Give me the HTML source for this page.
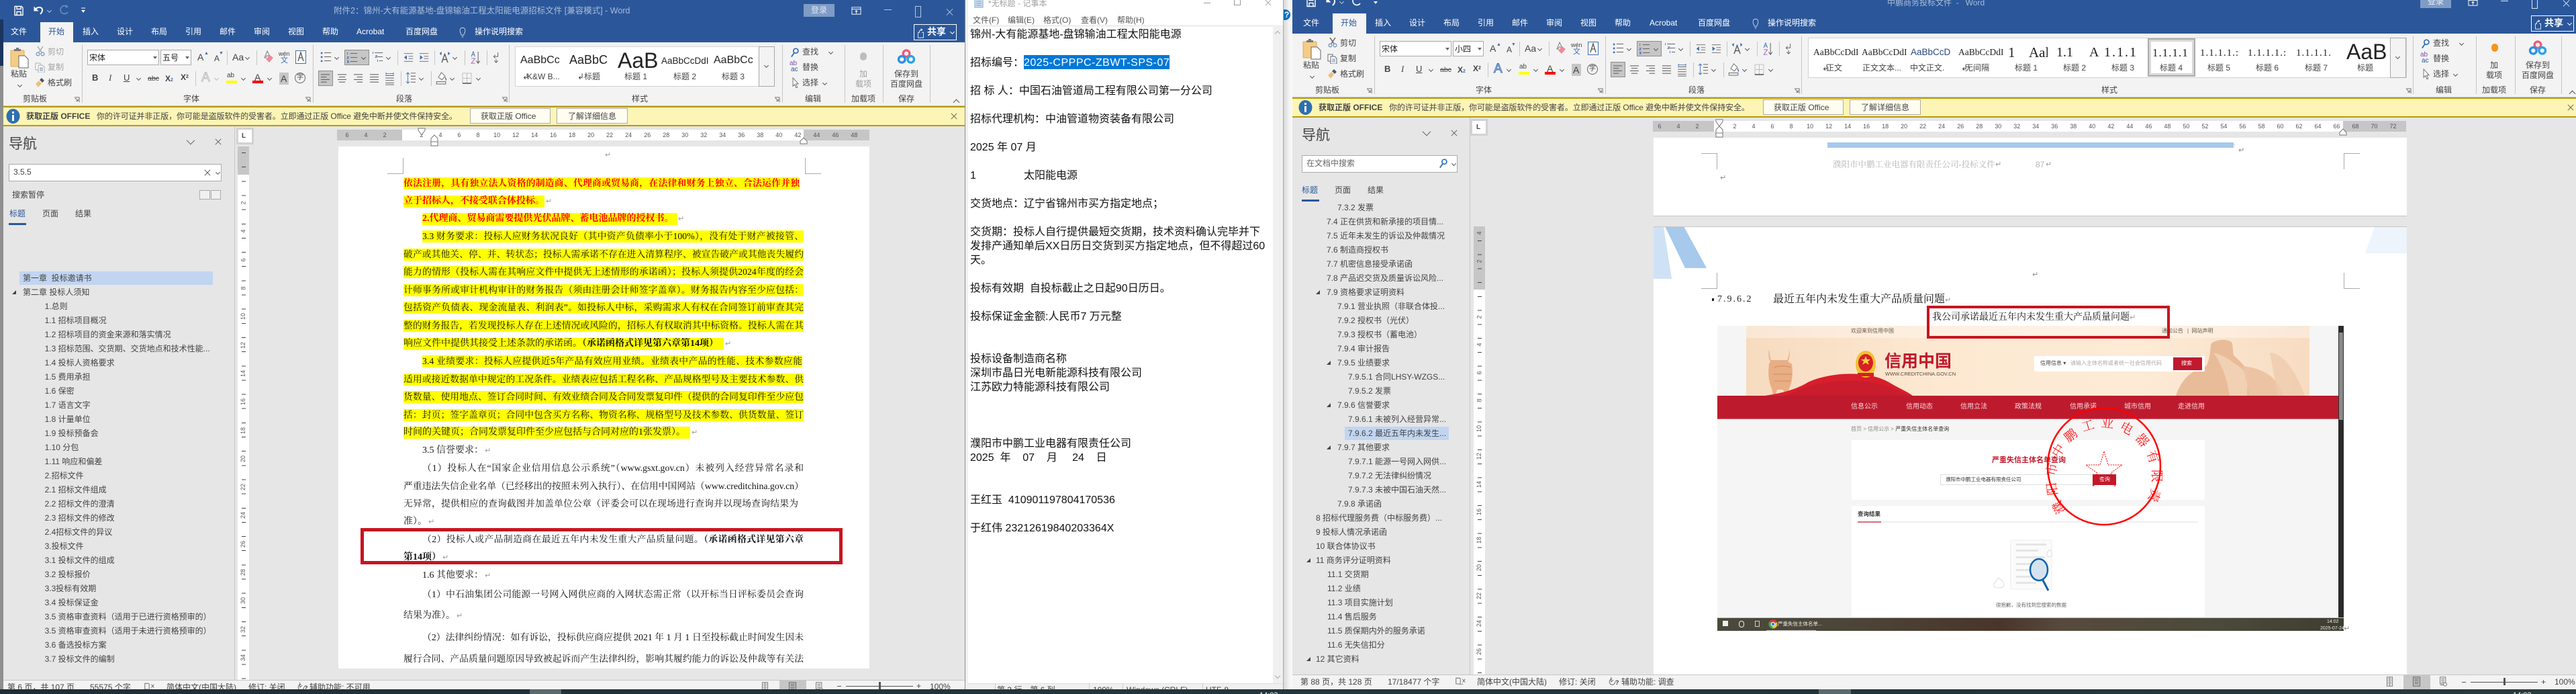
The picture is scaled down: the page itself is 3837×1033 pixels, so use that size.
<!DOCTYPE html>
<html lang="zh-CN"><head><meta charset="utf-8"><title>Word</title>
<style>
html,body{margin:0;padding:0;width:3837px;height:1033px;overflow:hidden;background:#e6e6e6}
body{position:relative;font-family:"Liberation Sans","Noto Sans CJK SC",sans-serif;font-size:12px;color:#444}
.a,i{position:absolute;white-space:nowrap;font-style:normal;line-height:14px}
div.a,svg.a{line-height:normal}
svg{display:block;overflow:visible}
.w{position:absolute}
.tab{top:40px;color:#fff;font-size:12px}
.sep{position:absolute;top:67px;width:1px;height:86px;background:#c6c6c6}
.lb{top:140px;color:#444}
.box{position:absolute;background:#fff;border:1px solid #ababab;box-sizing:border-box}
.ch{position:absolute;width:4px;height:4px;border-right:1px solid #555;border-bottom:1px solid #555;transform:rotate(45deg)}
.sel{position:absolute;background:#c6c6c6;border:1px solid #8e8e8e;box-sizing:border-box}
.rul{position:absolute;display:flex;font-size:9px;color:#555;line-height:16px;height:16px}
.rul span{width:28.03px;text-align:center;flex:none}
.vr{position:absolute;display:flex;flex-direction:column;font-size:9px;color:#555;width:17px}
.vr span{display:flex;align-items:center;justify-content:center;flex:none}
.vr span b{font-weight:normal;transform:rotate(-90deg);display:block}
.nav{position:absolute;font-size:12px;color:#444}
.nav div{height:21px;line-height:21px;white-space:nowrap;position:relative}
.tri{position:absolute;width:0;height:0;border-left:6px solid transparent;border-bottom:6px solid #444;top:7px}
.l{position:absolute;height:18px;white-space:nowrap;font:14px/18px "Liberation Serif","Noto Serif CJK SC",serif;color:#111;overflow:hidden}
.y{background:#ff0;color:#111}
.r{color:#f00;font-weight:bold}
.j{text-align:justify;text-align-last:justify;font-size:13.8px;white-space:normal}
.pm{color:#999;font:11px/18px "DejaVu Sans",sans-serif;margin-left:2px}
.np{position:absolute;left:1445px;font:16px/21px "Liberation Sans","Noto Sans CJK SC",sans-serif;color:#111;white-space:pre}
.m{font-size:12px;color:#555}
.tiny{position:absolute;white-space:nowrap;line-height:1.1;font-family:"Liberation Sans","Noto Sans CJK SC",sans-serif}
</style></head><body>

<svg width="0" height="0" style="position:absolute"><defs>
<symbol id="save" viewBox="0 0 16 16"><path d="M2 1.5h10l2 2v11H2z M5 1.5v4h6v-4 M5 14.5v-5h6v5" fill="none" stroke="#fff" stroke-width="1.4"/></symbol>
<symbol id="undo" viewBox="0 0 18 18"><path d="M4 8c2-4 9-4 10 0 .6 3-1 5-3 7" fill="none" stroke="#fff" stroke-width="2"/><path d="M1.500 3.500v7h7z" fill="#fff"/></symbol>
<symbol id="redo" viewBox="0 0 18 18"><path d="M13 4a6 6 0 1 0 1 8" fill="none" stroke="currentColor" stroke-width="1.600"/><path d="M11 1l4 3-4 2z" fill="currentColor"/></symbol>
<symbol id="more" viewBox="0 0 10 10"><path d="M2 1h6" stroke="#fff"/><path d="M2 4h6L5 8z" fill="#fff"/></symbol>
<symbol id="bulb" viewBox="0 0 14 24"><path d="M3.500 14C1 11 1 6 2.500 4c2-3 7-3 9 0 1.500 2 1.500 7-1 10l-1 3h-5zM5 19.500h4M6 22h2" fill="none" stroke="#fff"/></symbol>
<symbol id="paste" viewBox="0 0 30 32"><rect x="1" y="5" width="20" height="24" rx="1" fill="#f4cc85" stroke="#d8ad65"/><path d="M6 6v-3h3v-2h4v2h3v3z" fill="#777"/><path d="M13 13h9l5 5v13H13z" fill="#fff" stroke="#666"/></symbol>
<symbol id="cut" viewBox="0 0 15 15"><path d="M3 0l6 9M11 0L5 9" stroke="currentColor" stroke-width="1.500"/><circle cx="3.500" cy="11.500" r="2.400" fill="none" stroke="#6b8ec2" stroke-width="1.200"/><circle cx="10.500" cy="11.500" r="2.400" fill="none" stroke="#6b8ec2" stroke-width="1.200"/></symbol>
<symbol id="copy" viewBox="0 0 15 15"><path d="M1 1h7v10H1z" fill="#fff" stroke="currentColor"/><path d="M5 4h6l3 3v8H5z" fill="#fff" stroke="currentColor"/><path d="M7 8h5M7 10h5M7 12h5" stroke="#6b8ec2"/></symbol>
<symbol id="brush" viewBox="0 0 15 15"><path d="M1 9l5-5 4 4-5 6z" fill="#edc07b"/><path d="M7 3l3-3 4 4-3 3z" fill="#555"/></symbol>
<symbol id="launch" viewBox="0 0 10 10"><path d="M1 1h8v8" fill="none" stroke="#666"/><path d="M2 2l5 5M7 3.500V7H3.500" fill="none" stroke="#666"/></symbol>
<symbol id="erase" viewBox="0 0 16 20"><path d="M6 1L2 11h2l1-3h3l1 3h2z" fill="none" stroke="#7a7a7a"/><path d="M4 13l6-6 5 4-6 7z" fill="#ee8a9a"/></symbol>
<symbol id="boxA" viewBox="0 0 16 20"><rect x=".5" y=".5" width="15" height="19" fill="#fff" stroke="#3d6fb4"/><path d="M4 16L8 3l4 13M5.500 11h5" fill="none" stroke="#555" stroke-width="1.300"/></symbol>
<symbol id="ul" viewBox="0 0 20 20"><path d="M7 3h12M7 10h12M7 17h12" stroke="#666" stroke-width="1.200"/><path d="M1 2h3v3H1zM1 9h3v3H1zM1 16h3v3H1z" fill="#3d6fb4"/></symbol>
<symbol id="ol" viewBox="0 0 20 20"><path d="M7 3h12M7 10h12M7 17h12" stroke="#666" stroke-width="1.200"/><path d="M2 1v4M1 9h3l-3 3h3M1 16h3l-2 1.500 2 1.500H1" fill="none" stroke="#3d6fb4"/></symbol>
<symbol id="ml" viewBox="0 0 20 20"><path d="M5 3h14M9 10h10M13 17h6" stroke="#666" stroke-width="1.200"/><path d="M2 1v4M6 8h3l-3 3h3M10 15v4" fill="none" stroke="#3d6fb4"/></symbol>
<symbol id="ind1" viewBox="0 0 18 18"><path d="M1 2h16M9 7h8M9 11h8M1 16h16" stroke="#666" stroke-width="1.100"/><path d="M1 9l5-4v8z" fill="#3d6fb4"/></symbol>
<symbol id="ind2" viewBox="0 0 18 18"><path d="M1 2h16M9 7h8M9 11h8M1 16h16" stroke="#666" stroke-width="1.100"/><path d="M7 9L2 5v8z" fill="#3d6fb4"/></symbol>
<symbol id="cjk" viewBox="0 0 18 20"><path d="M4 19L9 5l5 14M6 14h6" fill="none" stroke="#555" stroke-width="1.500"/><path d="M1 4h3M14 4h3M1 4l2-2v4zM17 4l-2-2v4z" stroke="#3d6fb4" fill="#3d6fb4"/></symbol>
<symbol id="sort" viewBox="0 0 16 22"><path d="M1 9l3-8 3 8M2 6h4" fill="none" stroke="#3d6fb4"/><path d="M1 12h6l-6 8h6" fill="none" stroke="#a35cc0"/><path d="M12 1v19M9 16l3 4 3-4" fill="none" stroke="#555"/></symbol>
<symbol id="pil" viewBox="0 0 12 18"><path d="M9 0v7H3" fill="none" stroke="#555"/><path d="M4.500 4.500L2 7l2.500 2.500" fill="none" stroke="#555"/><path d="M6 11v6M3 14l3 3 3-3" fill="none" stroke="#555"/></symbol>
<symbol id="al" viewBox="0 0 16 16"><path d="M1 2h14M1 6h9M1 10h14M1 14h9" stroke="#666" stroke-width="1.200"/></symbol>
<symbol id="ac" viewBox="0 0 16 16"><path d="M1 2h14M3 6h10M1 10h14M3 14h10" stroke="#666" stroke-width="1.200"/></symbol>
<symbol id="ar" viewBox="0 0 16 16"><path d="M1 2h14M6 6h9M1 10h14M6 14h9" stroke="#666" stroke-width="1.200"/></symbol>
<symbol id="aj" viewBox="0 0 16 16"><path d="M1 2h14M1 6h14M1 10h14M1 14h14" stroke="#666" stroke-width="1.200"/></symbol>
<symbol id="ad" viewBox="0 0 16 22"><path d="M1 6h14M1 10h14M1 14h14M1 18h14M1 21h14" stroke="#666" stroke-width="1.100"/><path d="M2 1v4M14 1v4M2 3h12" stroke="#3d6fb4"/></symbol>
<symbol id="lsp" viewBox="0 0 18 20"><path d="M9 2h8M9 7h8M9 12h8M9 17h8" stroke="#666" stroke-width="1.200"/><path d="M4 1v18M1 4l3-3 3 3M1 16l3 3 3-3" fill="none" stroke="#3d6fb4"/></symbol>
<symbol id="shade" viewBox="0 0 18 22"><path d="M4 10l5-8 6 6-5 6z" fill="#fff" stroke="#666"/><path d="M15 10c2 3 2 4 1 5" fill="none" stroke="#3d6fb4" stroke-width="1.500"/><rect x="1" y="17" width="15" height="4" fill="#eee" stroke="#666"/></symbol>
<symbol id="bord" viewBox="0 0 16 18"><path d="M1 1h14v16H1z" fill="none" stroke="#777" stroke-dasharray="1 1.500"/><path d="M1 17h14" stroke="#444" stroke-width="1.500"/><path d="M8 2v14M2 9h12" stroke="#777" stroke-dasharray="1 1.500"/></symbol>
<symbol id="find" viewBox="0 0 14 16"><circle cx="9" cy="5" r="3.800" fill="none" stroke="#2f6fb7" stroke-width="1.800"/><path d="M6.500 8L2 14.500" stroke="#2f6fb7" stroke-width="2"/></symbol>
<symbol id="curs" viewBox="0 0 12 18"><path d="M1 1l9 10H6l2.500 6-2 .8L4 12l-3 3z" fill="#fff" stroke="#666"/></symbol>
<symbol id="bd" viewBox="0 0 28 24"><circle cx="14" cy="7" r="5" fill="none" stroke="#ee5a78" stroke-width="3.500"/><circle cx="7" cy="16" r="5" fill="none" stroke="#2b8fe8" stroke-width="3.500"/><circle cx="21" cy="16" r="5" fill="none" stroke="#27a4ea" stroke-width="3.500"/></symbol>
<symbol id="share" viewBox="0 0 12 20"><path d="M1 9h3M8 9h3v10H1V9" fill="none" stroke="#fff"/><path d="M3 10c0-3 1-6 5-6M6 2l3 2-3 2" fill="none" stroke="#fff"/></symbol>
<symbol id="rest" viewBox="0 0 16 16"><path d="M1 3h14v11H1zM1 6h14M8 13V8M6 10l2-2 2 2" fill="none" stroke="#fff"/></symbol>
<symbol id="x" viewBox="0 0 12 12"><path d="M1 1l10 10M11 1L1 11" stroke="currentColor" stroke-width="1"/></symbol>
<symbol id="book" viewBox="0 0 20 14"><path d="M1 1h6l2 1v11l-2-1H1zM11 13l3-1" fill="none" stroke="#555"/><path d="M13 3l5 6M18 3l-5 6" stroke="#555"/></symbol>
<symbol id="acc" viewBox="0 0 18 14"><path d="M6 3a5 5 0 1 0 5 5" fill="none" stroke="#555"/><path d="M4 0v8l4-3" fill="none" stroke="#555"/><text x="11" y="13" font-size="11" font-weight="bold" fill="#444">?</text></symbol>
<symbol id="vw1" viewBox="0 0 12 18"><path d="M1 1h10v16H1zM6 1v16M2.500 4h2M2.500 7h2M2.500 10h2M2.500 13h2M7.500 4h2M7.500 7h2M7.500 10h2M7.500 13h2" fill="none" stroke="#666"/></symbol>
<symbol id="vw2" viewBox="0 0 14 18"><path d="M1 1h12v16H1zM3 4h8M3 7h8M3 10h8M3 13h8" fill="none" stroke="#555"/></symbol>
<symbol id="vw3" viewBox="0 0 14 18"><path d="M1 1h10v12H1zM3 4h6M3 7h6M3 10h6M1 15h7" fill="none" stroke="#666"/><circle cx="10" cy="14" r="3" fill="#fff" stroke="#666"/></symbol>
</defs></svg>

<!-- screen edges -->
<div class="w" style="left:0;top:0;width:5px;height:1026px;background:linear-gradient(#2b579a 0 29px,#1b3460 29px 98px,#8f8f8f 98px)"></div>
<div class="w" style="left:1912px;top:0;width:13px;height:1026px;background:linear-gradient(90deg,#d8d8d8,#f3f3f3 8px,#fafafa)"></div>
<div class="w" style="left:1906px;top:14px;width:16px;height:16px;border-radius:8px;background:#0f6cbd"></div>
<i style="left:1913px;top:15px;color:#fff;font-weight:bold;font-size:12px">?</i>

<!-- ================== LEFT WORD ================== -->
<div class="w" style="left:0;top:0;width:1437px;height:1026px;overflow:hidden">
<div class="w" style="left:5px;top:0;width:1432px;height:63px;background:#2b579a"></div>
<div class="w" style="left:5px;top:63px;width:1432px;height:94px;background:#f3f3f3;border-bottom:1px solid #c6c6c6"></div>
<div class="w" style="left:5px;top:158px;width:1432px;height:30px;background:#fcf5b5;border-top:2px solid #b99a08;border-bottom:2px solid #b99a08;box-sizing:border-box"></div>

<svg class="a" style="left:20px;top:7px;color:#fff" width="16" height="18"><use href="#save"/></svg>
<svg class="a" style="left:49px;top:6px" width="18" height="18"><use href="#undo"/></svg>
<div class="ch" style="left:71px;top:13px;border-color:#b9c8e0"></div>
<svg class="a" style="left:87px;top:6px;color:#6d8dbd" width="18" height="18"><use href="#redo"/></svg>
<svg class="a" style="left:119px;top:11px" width="10" height="10"><use href="#more"/></svg>
<i style="left:497px;top:9px;color:#a9bcd9;font-size:12.500px">附件2：锦州-大有能源基地-盘锦输油工程太阳能电源招标文件 [兼容模式]  -  Word</i>

<i class="tab" style="left:16px">文件</i>
<div class="w" style="left:60px;top:33px;width:49px;height:30px;background:#f3f3f3"></div>
<i class="tab" style="left:72px;color:#2b579a">开始</i><i class="tab" style="left:123px">插入</i><i class="tab" style="left:174px">设计</i><i class="tab" style="left:225px">布局</i><i class="tab" style="left:276px">引用</i><i class="tab" style="left:327px">邮件</i><i class="tab" style="left:378px">审阅</i><i class="tab" style="left:429px">视图</i><i class="tab" style="left:480px">帮助</i><i class="tab" style="left:531px">Acrobat</i><i class="tab" style="left:604px">百度网盘</i>
<svg class="a" style="left:682px;top:40px" width="14" height="17"><use href="#bulb"/></svg>
<i class="tab" style="left:707px">操作说明搜索</i>

<!-- clipboard -->
<svg class="a" style="left:15px;top:70px" width="30" height="32"><use href="#paste"/></svg>
<i style="left:16px;top:103px">粘贴</i><div class="ch" style="left:27px;top:124px"></div>
<svg class="a" style="left:53px;top:69px;color:#aaa" width="15" height="15"><use href="#cut"/></svg><i style="left:71px;top:70px;color:#a5a5a5">剪切</i>
<svg class="a" style="left:52px;top:93px;color:#aaa" width="15" height="15"><use href="#copy"/></svg><i style="left:71px;top:93px;color:#a5a5a5">复制</i>
<svg class="a" style="left:52px;top:116px" width="15" height="15"><use href="#brush"/></svg><i style="left:71px;top:116px">格式刷</i>
<i class="lb" style="left:34px">剪贴板</i><svg class="a" style="left:110px;top:144px" width="9" height="9"><use href="#launch"/></svg>
<div class="sep" style="left:122px"></div>
<!-- font -->
<div class="box" style="left:130px;top:74px;width:107px;height:23px"></div><i style="left:133px;top:79px;color:#222">宋体</i>
<div class="w" style="left:228px;top:84px;border:3px solid transparent;border-top:4px solid #666"></div>
<div class="box" style="left:239px;top:74px;width:46px;height:23px"></div><i style="left:242px;top:79px;color:#222">五号</i>
<div class="w" style="left:276px;top:84px;border:3px solid transparent;border-top:4px solid #666"></div>
<i style="left:294px;top:78px;font-size:14px">A</i><i style="left:304px;top:73px;font-size:7px;color:#3d6fb4">▲</i>
<i style="left:319px;top:80px;font-size:12px">A</i><i style="left:326px;top:73px;font-size:7px;color:#3d6fb4">▼</i>
<div class="sep" style="left:338px;top:75px;height:22px"></div>
<i style="left:346px;top:78px;font-size:14px">Aa</i><div class="ch" style="left:366px;top:83px"></div>
<div class="sep" style="left:382px;top:75px;height:22px"></div>
<svg class="a" style="left:392px;top:75px" width="16" height="20"><use href="#erase"/></svg>
<i style="left:415px;top:73px;font-size:9px">wén</i><i style="left:418px;top:83px;font-size:11px;color:#3d6fb4">文</i>
<svg class="a" style="left:440px;top:75px" width="16" height="20"><use href="#boxA"/></svg>
<i style="left:137px;top:109px;font-weight:bold;font-size:13px">B</i><i style="left:162px;top:109px;font-style:italic;font-size:13px;font-family:'Liberation Serif'">I</i><i style="left:184px;top:109px;font-size:13px;text-decoration:underline">U</i><div class="ch" style="left:204px;top:114px"></div>
<i style="left:220px;top:110px;font-size:10.500px;text-decoration:line-through">abc</i><i style="left:246px;top:110px;font-size:12px;font-weight:bold">X<span style="font-size:7px;color:#3d6fb4">2</span></i><i style="left:269px;top:108px;font-size:12px;font-weight:bold">X<span style="font-size:7px;vertical-align:top">2</span></i>
<div class="sep" style="left:291px;top:106px;height:22px"></div>
<i class="fx" style="left:300px;top:106px;font-size:19px;line-height:20px;color:#fff;-webkit-text-stroke:1px #b8b8b8">A</i><div class="ch" style="left:320px;top:114px;border-color:#bbb"></div>
<i style="left:338px;top:106px;font-size:10px">ab</i><div class="w" style="left:337px;top:120px;width:16px;height:4px;background:#ff0"></div><div class="ch" style="left:360px;top:114px"></div>
<i style="left:379px;top:108px;font-size:14px">A</i><div class="w" style="left:376px;top:120px;width:16px;height:4px;background:#f00"></div><div class="ch" style="left:399px;top:114px"></div>
<div class="w" style="left:416px;top:108px;width:14px;height:18px;background:#c6c6c6"></div><i style="left:418px;top:110px;font-size:14px">A</i>
<div class="w" style="left:439px;top:108px;width:16px;height:16px;border:1px solid #666;border-radius:9px;box-sizing:border-box"></div><i style="left:442px;top:109px;font-size:10px;line-height:14px">字</i>
<i class="lb" style="left:273px">字体</i><svg class="a" style="left:454px;top:144px" width="9" height="9"><use href="#launch"/></svg>
<div class="sep" style="left:466px"></div>
<!-- para -->
<svg class="a" style="left:477px;top:76px" width="17" height="17"><use href="#ul"/></svg><div class="ch" style="left:499px;top:83px"></div>
<div class="sel" style="left:513px;top:74px;width:37px;height:23px"></div><svg class="a" style="left:516px;top:77px" width="17" height="17"><use href="#ol"/></svg><div class="ch" style="left:539px;top:83px"></div>
<svg class="a" style="left:554px;top:76px" width="17" height="17"><use href="#ml"/></svg><div class="ch" style="left:576px;top:83px"></div>
<div class="sep" style="left:592px;top:75px;height:22px"></div>
<svg class="a" style="left:600px;top:78px" width="17" height="15"><use href="#ind1"/></svg><svg class="a" style="left:623px;top:78px" width="17" height="15"><use href="#ind2"/></svg>
<div class="sep" style="left:647px;top:75px;height:22px"></div>
<svg class="a" style="left:654px;top:76px" width="17" height="18"><use href="#cjk"/></svg><div class="ch" style="left:675px;top:83px"></div>
<div class="sep" style="left:692px;top:75px;height:22px"></div>
<svg class="a" style="left:701px;top:76px" width="15" height="20"><use href="#sort"/></svg>
<div class="sep" style="left:725px;top:75px;height:22px"></div>
<svg class="a" style="left:733px;top:78px" width="12" height="16"><use href="#pil"/></svg>
<div class="sel" style="left:474px;top:105px;width:22px;height:23px"></div>
<svg class="a" style="left:477px;top:109px" width="15" height="15"><use href="#al"/></svg><svg class="a" style="left:502px;top:109px" width="15" height="15"><use href="#ac"/></svg><svg class="a" style="left:526px;top:109px" width="15" height="15"><use href="#ar"/></svg><svg class="a" style="left:550px;top:109px" width="15" height="15"><use href="#aj"/></svg><svg class="a" style="left:573px;top:107px" width="15" height="20"><use href="#ad"/></svg>
<div class="sep" style="left:597px;top:106px;height:22px"></div>
<svg class="a" style="left:604px;top:107px" width="16" height="18"><use href="#lsp"/></svg><div class="ch" style="left:625px;top:114px"></div>
<div class="sep" style="left:642px;top:106px;height:22px"></div>
<svg class="a" style="left:649px;top:106px" width="17" height="20"><use href="#shade"/></svg><div class="ch" style="left:671px;top:114px"></div>
<svg class="a" style="left:688px;top:108px" width="15" height="17"><use href="#bord"/></svg><div class="ch" style="left:710px;top:114px"></div>
<i class="lb" style="left:590px">段落</i><svg class="a" style="left:747px;top:144px" width="9" height="9"><use href="#launch"/></svg>
<div class="sep" style="left:758px"></div>
<!-- gallery -->
<div class="w" style="left:767px;top:69px;width:386px;height:60px;background:#fff;border:1px solid #d2d2d2;box-sizing:border-box"></div>
<div class="w" style="left:1130px;top:69px;width:24px;height:60px;background:#f3f3f3;border:1px solid #a8a8a8;box-sizing:border-box"></div>
<div class="ch" style="left:1139px;top:95px"></div>
<i style="left:775px;top:83px;font-size:16px;color:#222">AaBbCc</i><i style="left:778px;top:107px">↲</i><i style="left:785px;top:107px">K&amp;W B...</i>
<i style="left:848px;top:82px;font-size:18px;color:#222">AaBbC</i><i style="left:860px;top:107px">↲</i><i style="left:870px;top:107px">标题</i>
<i style="left:920px;top:79px;font-size:32px;color:#222;line-height:22px">AaB</i><i style="left:930px;top:107px">标题 1</i>
<i style="left:985px;top:84px;font-size:13.500px;color:#222">AaBbCcDdI</i><i style="left:1003px;top:107px">标题 2</i>
<i style="left:1063px;top:83px;font-size:16px;color:#222">AaBbCc</i><i style="left:1075px;top:107px">标题 3</i>
<i class="lb" style="left:941px">样式</i><svg class="a" style="left:1153px;top:144px" width="9" height="9"><use href="#launch"/></svg>
<!-- right groups -->
<div class="sep" style="left:1165px"></div>
<svg class="a" style="left:1177px;top:71px" width="13" height="15"><use href="#find"/></svg><i style="left:1195px;top:70px">查找</i><div class="ch" style="left:1235px;top:75px"></div>
<i style="left:1176px;top:90px;font-size:10px;line-height:10px;color:#7b4fa8">ab</i><i style="left:1178px;top:99px;font-size:10px;line-height:10px;color:#2b579a">ac</i><i style="left:1195px;top:93px">替换</i>
<svg class="a" style="left:1180px;top:115px" width="11" height="16"><use href="#curs"/></svg><i style="left:1195px;top:116px">选择</i><div class="ch" style="left:1226px;top:121px"></div>
<i class="lb" style="left:1199px">编辑</i>
<div class="sep" style="left:1258px"></div>
<div class="w" style="left:1281px;top:78px;width:10px;height:12px;border-radius:5px;background:#bdbdbd"></div>
<i style="left:1280px;top:103px;color:#a0a0a0">加</i><i style="left:1274px;top:118px;color:#a0a0a0">载项</i>
<i class="lb" style="left:1268px">加载项</i>
<div class="sep" style="left:1315px"></div>
<svg class="a" style="left:1336px;top:73px" width="28" height="23"><use href="#bd"/></svg>
<i style="left:1332px;top:103px">保存到</i><i style="left:1326px;top:118px">百度网盘</i>
<i class="lb" style="left:1338px">保存</i>
<div class="sep" style="left:1385px"></div>
<div class="w" style="left:1421px;top:149px;width:6px;height:6px;border-left:1px solid #555;border-top:1px solid #555;transform:rotate(45deg)"></div>
<!-- title right -->
<div class="w" style="left:1197px;top:6px;width:46px;height:19px;background:#7f9cc6"></div><i style="left:1208px;top:8px;color:#dfe7f3">登录</i>
<svg class="a" style="left:1268px;top:8px" width="15" height="15"><use href="#rest"/></svg>
<div class="w" style="left:1317px;top:14px;width:11px;height:1px;background:#b6c6df"></div>
<div class="w" style="left:1363px;top:9px;width:9px;height:17px;border:1px solid #b6c6df;box-sizing:border-box"></div>
<svg class="a" style="left:1409px;top:9px;color:#b6c6df" width="11" height="18"><use href="#x" /></svg>
<div class="w" style="left:1361px;top:36px;width:64px;height:24px;border:1px solid #fff;box-sizing:border-box"></div>
<svg class="a" style="left:1366px;top:41px" width="11" height="16"><use href="#share"/></svg><i style="left:1381px;top:40px;color:#fff;font-size:14px;font-weight:bold">共享</i><div class="ch" style="left:1416px;top:45px;border-color:#fff"></div>
<!-- message bar -->
<svg class="a" style="left:9px;top:162px" width="21" height="22"><ellipse cx="10.500" cy="11" rx="10" ry="11" fill="#2f6fb0"/><rect x="9" y="9" width="3" height="9" fill="#fff"/><rect x="9" y="4" width="3" height="3" fill="#fff"/></svg>
<i style="left:39px;top:166px;font-weight:bold;color:#444;font-size:12px">获取正版 OFFICE</i>
<i style="left:144px;top:166px;color:#444;font-size:12px;letter-spacing:-.1px">你的许可证并非正版，你可能是盗版软件的受害者。立即通过正版 Office 避免中断并使文件保持安全。</i>
<div class="box" style="left:700px;top:161px;width:120px;height:23px;background:#fffdf0"></div><i style="left:716px;top:166px">获取正版 Office</i>
<div class="box" style="left:829px;top:161px;width:106px;height:23px;background:#fffdf0"></div><i style="left:846px;top:166px">了解详细信息</i>
<svg class="a" style="left:1416px;top:168px;color:#555" width="10" height="10"><use href="#x"/></svg>

<!-- nav -->
<div class="w" style="left:349px;top:188px;width:1px;height:824px;background:#c8c8c8"></div>
<i style="left:13px;top:204px;font-size:21px;line-height:22px;color:#444">导航</i>
<div class="w" style="left:279px;top:204px;width:9px;height:9px;border-right:1px solid #555;border-bottom:1px solid #555;transform:rotate(45deg) scale(.9)"></div>
<svg class="a" style="left:320px;top:206px;color:#555" width="10" height="10"><use href="#x"/></svg>
<div class="box" style="left:13px;top:244px;width:317px;height:26px"></div><i style="left:20px;top:249px;font-size:12px">3.5.5</i>
<svg class="a" style="left:304px;top:252px;color:#444" width="10" height="10"><use href="#x"/></svg><div class="ch" style="left:322px;top:254px"></div>
<i style="left:18px;top:283px">搜索暂停</i>
<div class="box" style="left:297px;top:283px;width:16px;height:14px;background:#f0f0f0"></div><div class="box" style="left:314px;top:283px;width:15px;height:14px;background:#f0f0f0"></div>
<i style="left:14px;top:311px;color:#2b579a">标题</i><i style="left:63px;top:311px">页面</i><i style="left:112px;top:311px">结果</i>
<div class="w" style="left:13px;top:332px;width:26px;height:3px;background:#2b579a"></div>
<div class="w" style="left:29px;top:404px;width:288px;height:20px;background:#c1d5f1"></div>
<div class="nav" style="left:0;top:403.500px;width:340px">
<div style="padding-left:34px">第一章&nbsp;&nbsp;投标邀请书</div>
<div style="padding-left:34px"><span class="tri" style="left:18px"></span>第二章 投标人须知</div>
<div style="padding-left:66.600px">1.总则</div><div style="padding-left:66.600px">1.1 招标项目概况</div><div style="padding-left:66.600px">1.2 招标项目的资金来源和落实情况</div><div style="padding-left:66.600px">1.3 招标范围、交货期、交货地点和技术性能...</div><div style="padding-left:66.600px">1.4 投标人资格要求</div><div style="padding-left:66.600px">1.5 费用承担</div><div style="padding-left:66.600px">1.6 保密</div><div style="padding-left:66.600px">1.7 语言文字</div><div style="padding-left:66.600px">1.8 计量单位</div><div style="padding-left:66.600px">1.9 投标预备会</div><div style="padding-left:66.600px">1.10 分包</div><div style="padding-left:66.600px">1.11 响应和偏差</div><div style="padding-left:66.600px">2.招标文件</div><div style="padding-left:66.600px">2.1 招标文件组成</div><div style="padding-left:66.600px">2.2 招标文件的澄清</div><div style="padding-left:66.600px">2.3 招标文件的修改</div><div style="padding-left:66.600px">2.4招标文件的异议</div><div style="padding-left:66.600px">3.投标文件</div><div style="padding-left:66.600px">3.1 投标文件的组成</div><div style="padding-left:66.600px">3.2 投标报价</div><div style="padding-left:66.600px">3.3投标有效期</div><div style="padding-left:66.600px">3.4 投标保证金</div><div style="padding-left:66.600px">3.5 资格审查资料（适用于已进行资格预审的）</div><div style="padding-left:66.600px">3.5 资格审查资料（适用于未进行资格预审的）</div><div style="padding-left:66.600px">3.6 备选投标方案</div><div style="padding-left:66.600px">3.7 投标文件的编制</div>
</div>

<!-- rulers -->
<div class="w" style="left:352px;top:190px;width:26px;height:25px;background:#d2d2d2"></div><div class="w" style="left:355px;top:193px;width:20px;height:19px;background:#fff"></div><i style="left:360px;top:196px;font-weight:bold;font-size:10px">L</i>
<div class="w" style="left:502px;top:193px;width:793px;height:16px;background:#fff"></div>
<div class="w" style="left:502px;top:193px;width:97px;height:16px;background:#c6c6c6"></div>
<div class="w" style="left:1197px;top:193px;width:98px;height:16px;background:#c6c6c6"></div>
<div class="rul" style="left:503px;top:193px"><span>6</span><span>4</span><span>2</span></div>
<div class="rul" style="left:614px;top:193px"><span>2</span><span>4</span><span>6</span><span>8</span><span>10</span><span>12</span><span>14</span><span>16</span><span>18</span><span>20</span><span>22</span><span>24</span><span>26</span><span>28</span><span>30</span><span>32</span><span>34</span><span>36</span><span>38</span><span>40</span><span>42</span><span>44</span><span>46</span><span>48</span></div>
<svg class="a" style="left:622px;top:190px" width="35" height="28"><path d="M1 1h10v3l-5 7-5-7z" fill="#fff" stroke="#777"/><path d="M31 11l5 5v11H26V16z" transform="translate(-6,0)" fill="#fff" stroke="#777"/><path d="M20 21h10" stroke="#777"/></svg>
<svg class="a" style="left:1192px;top:204px" width="12" height="10"><path d="M5 1l5 5v4H0V6z" fill="#fff" stroke="#777"/></svg>
<div class="w" style="left:354px;top:218px;width:17px;height:794px;background:#fff"></div>
<div class="w" style="left:354px;top:218px;width:17px;height:42px;background:#c6c6c6"></div>
<div class="w" style="left:360px;top:217.100px;width:6px;height:795px;background:repeating-linear-gradient(transparent 0 10px,#444 10px 11px,transparent 11px 31.200px,#444 31.200px 32.200px,transparent 32.200px 42.300px)"></div>
<div class="vr" style="left:354px;top:281px"><span style="height:42.300px"><b>2</b></span><span style="height:42.300px"><b>4</b></span><span style="height:42.300px"><b>6</b></span><span style="height:42.300px"><b>8</b></span><span style="height:42.300px"><b>10</b></span><span style="height:42.300px"><b>12</b></span><span style="height:42.300px"><b>14</b></span><span style="height:42.300px"><b>16</b></span><span style="height:42.300px"><b>18</b></span><span style="height:42.300px"><b>20</b></span><span style="height:42.300px"><b>22</b></span><span style="height:42.300px"><b>24</b></span><span style="height:42.300px"><b>26</b></span><span style="height:42.300px"><b>28</b></span><span style="height:42.300px"><b>30</b></span><span style="height:42.300px"><b>32</b></span><span style="height:42.300px"><b>34</b></span></div>

<!-- page -->
<div class="w" style="left:504px;top:218px;width:791px;height:777px;background:#fff"></div>
<div class="w" style="left:600px;top:235px;width:1px;height:24px;background:#aaa"></div><div class="w" style="left:577px;top:258px;width:24px;height:1px;background:#aaa"></div>
<div class="w" style="left:1199px;top:235px;width:1px;height:24px;background:#aaa"></div><div class="w" style="left:1199px;top:258px;width:24px;height:1px;background:#aaa"></div>
<i class="pm" style="left:899px;top:222px">↵</i>

<div class="l y r j" style="left:601px;top:264px;width:590px;color:#f00">依法注册，具有独立法人资格的制造商、代理商或贸易商，在法律和财务上独立、合法运作并独</div>
<div class="l y r" style="left:601px;top:291px;color:#f00">立于招标人，不接受联合体投标。</div><i class="pm" style="left:811px;top:291px">↵</i>
<div class="l y r" style="left:629px;top:317px;color:#f00;width:380px">2.代理商、贸易商需要提供光伏品牌、蓄电池品牌的授权书。</div><i class="pm" style="left:1008px;top:317px">↵</i>
<div class="l y j" style="left:629px;top:343px;width:568px">3.3 财务要求：投标人应财务状况良好（其中资产负债率小于100%），没有处于财产被接管、</div>
<div class="l y j" style="left:601px;top:370px;width:596px">破产或其他关、停、并、转状态；投标人需承诺不存在进入清算程序、被宣告破产或其他丧失履约</div>
<div class="l y j" style="left:601px;top:396px;width:596px">能力的情形（投标人需在其响应文件中提供无上述情形的承诺函）；投标人须提供2024年度的经会</div>
<div class="l y j" style="left:601px;top:423px;width:596px">计师事务所或审计机构审计的财务报告（须由注册会计师签字盖章）。财务报告内容至少应包括：</div>
<div class="l y j" style="left:601px;top:449px;width:596px">包括资产负债表、现金流量表、利润表”。如投标人中标，采购需求人有权在合同签订前审查其完</div>
<div class="l y j" style="left:601px;top:476px;width:596px">整的财务报告，若发现投标人存在上述情况或风险的，招标人有权取消其中标资格。投标人需在其</div>
<div class="l y" style="left:601px;top:503px;width:477px">响应文件中提供其接受上述条款的承诺函。<b>（承诺函格式详见第六章第14项）</b></div><i class="pm" style="left:1078px;top:503px">↵</i>
<div class="l y j" style="left:629px;top:529px;width:566px">3.4 业绩要求：投标人应提供近5年产品有效应用业绩。业绩表中产品的性能、技术参数应能</div>
<div class="l y j" style="left:601px;top:556px;width:596px">适用或接近数据单中规定的工况条件。业绩表应包括工程名称、产品规格型号及主要技术参数、供</div>
<div class="l y j" style="left:601px;top:582px;width:596px">货数量、使用地点、签订合同时间、有效业绩合同及合同发票复印件（提供的合同复印件至少应包</div>
<div class="l y j" style="left:601px;top:609px;width:596px">括：封页；签字盖章页；合同中包含买方名称、物资名称、规格型号及技术参数、供货数量、签订</div>
<div class="l y" style="left:601px;top:635px;width:427px">时间的关键页；合同发票复印件至少应包括与合同对应的1张发票）。</div><i class="pm" style="left:1028px;top:635px">↵</i>
<div class="l" style="left:629px;top:662px">3.5 信誉要求：<span class="pm">↵</span></div>
<div class="l j" style="left:629px;top:688px;width:568px">（1）投标人在“国家企业信用信息公示系统”（www.gsxt.gov.cn）未被列入经营异常名录和</div>
<div class="l j" style="left:601px;top:715px;width:596px">严重违法失信企业名单（已经移出的按照未列入执行）、在信用中国网站（www.creditchina.gov.cn）</div>
<div class="l j" style="left:601px;top:741px;width:588px">无异常，提供相应的查询截图并加盖单位公章（评委会可以在现场进行查询并以现场查询结果为</div>
<div class="l" style="left:601px;top:768px">准）。<span class="pm">↵</span></div>
<div class="l j" style="left:629px;top:794px;width:568px">（2）投标人或产品制造商在最近五年内未发生重大产品质量问题。<b>（承诺函格式详见第六章</b></div>
<div class="l" style="left:601px;top:821px"><b>第14项）</b><span class="pm">↵</span></div>
<div class="l" style="left:629px;top:848px">1.6 其他要求：<span class="pm">↵</span></div>
<div class="l j" style="left:629px;top:876px;width:568px">（1）中石油集团公司能源一号网入网供应商的入网状态需正常（以开标当日评标委员会查询</div>
<div class="l" style="left:601px;top:908px">结果为准）。<span class="pm">↵</span></div>
<div class="l j" style="left:629px;top:940px;width:568px">（2）法律纠纷情况：如有诉讼，投标供应商应提供 2021 年 1 月 1 日至投标截止时间发生因未</div>
<div class="l j" style="left:601px;top:972px;width:596px">履行合同、产品质量问题原因导致被起诉而产生法律纠纷，影响其履约能力的诉讼及仲裁等有关法</div>
<div class="w" style="left:537px;top:786px;width:718px;height:54px;border:5px solid #c9141f;box-sizing:border-box"></div>

<!-- status -->
<div class="w" style="left:5px;top:1012px;width:1432px;height:14px;background:#f3f3f3;border-top:1px solid #c6c6c6;box-sizing:border-box"></div>
<i style="left:11px;top:1016px">第 6 页，共 107 页</i><i style="left:134px;top:1016px">55575 个字</i>
<svg class="a" style="left:215px;top:1016px" width="16" height="12"><use href="#book"/></svg>
<i style="left:248px;top:1016px">简体中文(中国大陆)</i><i style="left:370px;top:1016px">修订: 关闭</i>
<svg class="a" style="left:443px;top:1016px" width="16" height="12"><use href="#acc"/></svg><i style="left:461px;top:1016px">辅助功能: 不可用</i>
<svg class="a" style="left:1134px;top:1015px" width="11" height="15"><use href="#vw1"/></svg>
<div class="w" style="left:1161px;top:1013px;width:40px;height:13px;background:#c6c6c6"></div>
<svg class="a" style="left:1174px;top:1015px" width="13" height="15"><use href="#vw2"/></svg>
<svg class="a" style="left:1214px;top:1015px" width="13" height="15"><use href="#vw3"/></svg>
<div class="w" style="left:1247px;top:1021px;width:6px;height:1px;background:#555"></div><div class="w" style="left:1260px;top:1021px;width:100px;height:1px;background:#555"></div><div class="w" style="left:1309px;top:1015px;width:3px;height:11px;background:#555"></div>
<i style="left:1365px;top:1014px">+</i><i style="left:1385px;top:1015px">100%</i>
</div>

<!-- ================== NOTEPAD ================== -->
<div class="w" style="left:1437px;top:0;width:475px;height:1026px;background:#fff;border-left:1px solid #8d8d8d;box-sizing:border-box"></div>
<div class="w" style="left:1438px;top:0;width:4px;height:1026px;background:#f0f0f0"></div>
<div class="w" style="left:1442px;top:37px;width:470px;height:3px;background:#f0f0f0"></div>
<div class="w" style="left:1896px;top:40px;width:16px;height:977px;background:#f0f0f0"></div>
<div class="w" style="left:1911px;top:0;width:1px;height:1026px;background:#aaa"></div>
<svg class="a" style="left:1451px;top:0" width="15" height="12"><path d="M1-3h12v14H1z" fill="#cfe2f5" stroke="#7fa4c7"/><path d="M3 2h8M3 5h8M3 8h8" stroke="#7d9bb8"/></svg>
<i style="left:1472px;top:-2px;color:#a0a0a0;font-size:12px">*无标题 - 记事本</i>
<div class="w" style="left:1793px;top:4px;width:10px;height:1px;background:#999"></div>
<div class="w" style="left:1838px;top:-1px;width:10px;height:9px;border:1px solid #999;box-sizing:border-box"></div>
<svg class="a" style="left:1884px;top:-1px;color:#999" width="10" height="10"><use href="#x"/></svg>
<i class="m" style="left:1449px;top:23px">文件(F)</i><i class="m" style="left:1501px;top:23px">编辑(E)</i><i class="m" style="left:1554px;top:23px">格式(O)</i><i class="m" style="left:1610px;top:23px">查看(V)</i><i class="m" style="left:1664px;top:23px">帮助(H)</i>
<div class="w" style="left:1525px;top:82px;width:217px;height:21px;background:#0078d7"></div>
<div class="np" style="top:41px">锦州-大有能源基地-盘锦输油工程太阳能电源</div>
<div class="np" style="top:83px">招标编号：</div><div class="np" style="top:83px;left:1525px;color:#fff;letter-spacing:.5px">2025-CPPPC-ZBWT-SPS-074</div>
<div class="np" style="top:125px">招 标 人：中国石油管道局工程有限公司第一分公司</div>
<div class="np" style="top:167px">招标代理机构：中油管道物资装备有限公司</div>
<div class="np" style="top:209px">2025 年 07 月</div>
<div class="np" style="top:251px">1</div><div class="np" style="top:251px;left:1525px">太阳能电源</div>
<div class="np" style="top:293px">交货地点：辽宁省锦州市买方指定地点；</div>
<div class="np" style="top:335px">交货期：投标人自行提供最短交货期，技术资料确认完毕并下</div>
<div class="np" style="top:356px">发排产通知单后XX日历日交货到买方指定地点，但不得超过60</div>
<div class="np" style="top:377px">天。</div>
<div class="np" style="top:419px">投标有效期  自投标截止之日起90日历日。</div>
<div class="np" style="top:461px">投标保证金金额:人民币7 万元整</div>
<div class="np" style="top:524px">投标设备制造商名称</div>
<div class="np" style="top:545px">深圳市晶日光电新能源科技有限公司</div>
<div class="np" style="top:566px">江苏欧力特能源科技有限公司</div>
<div class="np" style="top:650px">濮阳市中鹏工业电器有限责任公司</div>
<div class="np" style="top:671px">2025  年    07    月     24    日</div>
<div class="np" style="top:734px">王红玉  410901197804170536</div>
<div class="np" style="top:776px">于红伟 23212619840203364X</div>
<div class="w" style="left:1900px;top:47px;width:5px;height:5px;border-left:1.500px solid #aaa;border-top:1.500px solid #aaa;transform:rotate(45deg)"></div>
<div class="w" style="left:1900px;top:1003px;width:5px;height:5px;border-right:1.500px solid #aaa;border-bottom:1.500px solid #aaa;transform:rotate(45deg)"></div>
<div class="w" style="left:1442px;top:1017px;width:469px;height:9px;background:#f0f0f0;border-top:1px solid #ddd;box-sizing:border-box;overflow:hidden"></div>
<div class="w" style="left:1482px;top:1017px;width:1px;height:9px;background:#ccc"></div><div class="w" style="left:1622px;top:1017px;width:1px;height:9px;background:#ccc"></div><div class="w" style="left:1672px;top:1017px;width:1px;height:9px;background:#ccc"></div><div class="w" style="left:1791px;top:1017px;width:1px;height:9px;background:#ccc"></div>
<div class="w" style="left:1442px;top:1017px;width:469px;height:9px;overflow:hidden">
<i style="left:43px;top:3px">第 3 行，第 6 列</i><i style="left:186px;top:3px">100%</i><i style="left:236px;top:3px">Windows (CRLF)</i><i style="left:354px;top:3px">UTF-8</i></div>

<!-- ================== RIGHT WORD ================== -->
<div class="w" style="left:1925px;top:-13px;width:1912px;height:1039px;overflow:hidden">
<div class="w" style="left:0;top:0;width:1912px;height:63px;background:#2b579a"></div>
<div class="w" style="left:0;top:63px;width:1912px;height:94px;background:#f3f3f3;border-bottom:1px solid #c6c6c6"></div>
<div class="w" style="left:0;top:158px;width:1912px;height:30px;background:#fcf5b5;border-top:2px solid #b99a08;border-bottom:2px solid #b99a08;box-sizing:border-box"></div>

<svg class="a" style="left:20px;top:7px" width="16" height="18"><use href="#save"/></svg>
<svg class="a" style="left:49px;top:6px" width="18" height="18"><use href="#undo"/></svg>
<div class="ch" style="left:71px;top:13px;border-color:#b9c8e0"></div>
<svg class="a" style="left:87px;top:6px;color:#fff" width="18" height="18"><use href="#redo"/></svg>
<svg class="a" style="left:119px;top:11px" width="10" height="10"><use href="#more"/></svg>
<i style="left:886px;top:10px;color:#a9bcd9">中鹏商务投标文件&nbsp;&nbsp;-&nbsp;&nbsp;&nbsp;Word</i>

<i class="tab" style="left:16px">文件</i>
<div class="w" style="left:60px;top:33px;width:50px;height:30px;background:#f3f3f3"></div>
<i class="tab" style="left:72px;color:#2b579a">开始</i><i class="tab" style="left:123px">插入</i><i class="tab" style="left:174px">设计</i><i class="tab" style="left:225px">布局</i><i class="tab" style="left:276px">引用</i><i class="tab" style="left:327px">邮件</i><i class="tab" style="left:378px">审阅</i><i class="tab" style="left:429px">视图</i><i class="tab" style="left:480px">帮助</i><i class="tab" style="left:532px">Acrobat</i><i class="tab" style="left:604px">百度网盘</i>
<svg class="a" style="left:683px;top:40px" width="14" height="17"><use href="#bulb"/></svg>
<i class="tab" style="left:708px">操作说明搜索</i>

<svg class="a" style="left:15px;top:70px" width="30" height="32"><use href="#paste"/></svg>
<i style="left:16px;top:103px">粘贴</i><div class="ch" style="left:27px;top:124px"></div>
<svg class="a" style="left:53px;top:69px;color:#666" width="15" height="15"><use href="#cut"/></svg><i style="left:71px;top:70px">剪切</i>
<svg class="a" style="left:52px;top:93px;color:#666" width="15" height="15"><use href="#copy"/></svg><i style="left:71px;top:93px">复制</i>
<svg class="a" style="left:52px;top:116px" width="15" height="15"><use href="#brush"/></svg><i style="left:71px;top:116px">格式刷</i>
<i class="lb" style="left:34px">剪贴板</i><svg class="a" style="left:110px;top:144px" width="9" height="9"><use href="#launch"/></svg>
<div class="sep" style="left:122px"></div>
<div class="box" style="left:130px;top:74px;width:107px;height:23px"></div><i style="left:133px;top:79px;color:#222">宋体</i>
<div class="w" style="left:228px;top:84px;border:3px solid transparent;border-top:4px solid #666"></div>
<div class="box" style="left:239px;top:74px;width:46px;height:23px"></div><i style="left:242px;top:79px;color:#222">小四</i>
<div class="w" style="left:276px;top:84px;border:3px solid transparent;border-top:4px solid #666"></div>
<i style="left:294px;top:78px;font-size:14px">A</i><i style="left:304px;top:73px;font-size:7px;color:#3d6fb4">▲</i>
<i style="left:319px;top:80px;font-size:12px">A</i><i style="left:326px;top:73px;font-size:7px;color:#3d6fb4">▼</i>
<div class="sep" style="left:338px;top:75px;height:22px"></div>
<i style="left:346px;top:78px;font-size:14px">Aa</i><div class="ch" style="left:366px;top:83px"></div>
<div class="sep" style="left:382px;top:75px;height:22px"></div>
<svg class="a" style="left:392px;top:75px" width="16" height="20"><use href="#erase"/></svg>
<i style="left:415px;top:73px;font-size:9px">wén</i><i style="left:418px;top:83px;font-size:11px;color:#3d6fb4">文</i>
<svg class="a" style="left:440px;top:75px" width="16" height="20"><use href="#boxA"/></svg>
<i style="left:137px;top:109px;font-weight:bold;font-size:13px">B</i><i style="left:162px;top:109px;font-style:italic;font-size:13px;font-family:'Liberation Serif'">I</i><i style="left:184px;top:109px;font-size:13px;text-decoration:underline">U</i><div class="ch" style="left:204px;top:114px"></div>
<i style="left:220px;top:110px;font-size:10.500px;text-decoration:line-through">abc</i><i style="left:246px;top:110px;font-size:12px;font-weight:bold">X<span style="font-size:7px;color:#3d6fb4">2</span></i><i style="left:269px;top:108px;font-size:12px;font-weight:bold">X<span style="font-size:7px;vertical-align:top">2</span></i>
<div class="sep" style="left:291px;top:106px;height:22px"></div>
<i style="left:300px;top:106px;font-size:19px;line-height:20px;color:#cfe0f5;-webkit-text-stroke:1px #3d6fb4">A</i><div class="ch" style="left:320px;top:114px"></div>
<i style="left:338px;top:106px;font-size:10px">ab</i><div class="w" style="left:337px;top:120px;width:16px;height:4px;background:#ff0"></div><div class="ch" style="left:360px;top:114px"></div>
<i style="left:379px;top:108px;font-size:14px">A</i><div class="w" style="left:376px;top:120px;width:16px;height:4px;background:#f00"></div><div class="ch" style="left:399px;top:114px"></div>
<div class="w" style="left:416px;top:108px;width:14px;height:18px;background:#c6c6c6"></div><i style="left:418px;top:110px;font-size:14px">A</i>
<div class="w" style="left:439px;top:108px;width:16px;height:16px;border:1px solid #666;border-radius:9px;box-sizing:border-box"></div><i style="left:442px;top:109px;font-size:10px">字</i>
<i class="lb" style="left:273px">字体</i><svg class="a" style="left:454px;top:144px" width="9" height="9"><use href="#launch"/></svg>
<div class="sep" style="left:466px"></div>
<svg class="a" style="left:477px;top:76px" width="17" height="17"><use href="#ul"/></svg><div class="ch" style="left:499px;top:83px"></div>
<div class="sel" style="left:513px;top:74px;width:37px;height:23px"></div><svg class="a" style="left:516px;top:77px" width="17" height="17"><use href="#ol"/></svg><div class="ch" style="left:539px;top:83px"></div>
<svg class="a" style="left:554px;top:76px" width="17" height="17"><use href="#ml"/></svg><div class="ch" style="left:576px;top:83px"></div>
<div class="sep" style="left:592px;top:75px;height:22px"></div>
<svg class="a" style="left:600px;top:78px" width="17" height="15"><use href="#ind1"/></svg><svg class="a" style="left:623px;top:78px" width="17" height="15"><use href="#ind2"/></svg>
<div class="sep" style="left:647px;top:75px;height:22px"></div>
<svg class="a" style="left:654px;top:76px" width="17" height="18"><use href="#cjk"/></svg><div class="ch" style="left:675px;top:83px"></div>
<div class="sep" style="left:692px;top:75px;height:22px"></div>
<svg class="a" style="left:701px;top:76px" width="15" height="20"><use href="#sort"/></svg>
<div class="sep" style="left:725px;top:75px;height:22px"></div>
<svg class="a" style="left:733px;top:78px" width="12" height="16"><use href="#pil"/></svg>
<div class="sel" style="left:474px;top:105px;width:22px;height:23px"></div>
<svg class="a" style="left:477px;top:109px" width="15" height="15"><use href="#al"/></svg><svg class="a" style="left:502px;top:109px" width="15" height="15"><use href="#ac"/></svg><svg class="a" style="left:526px;top:109px" width="15" height="15"><use href="#ar"/></svg><svg class="a" style="left:550px;top:109px" width="15" height="15"><use href="#aj"/></svg><svg class="a" style="left:573px;top:107px" width="15" height="20"><use href="#ad"/></svg>
<div class="sep" style="left:597px;top:106px;height:22px"></div>
<svg class="a" style="left:604px;top:107px" width="16" height="18"><use href="#lsp"/></svg><div class="ch" style="left:625px;top:114px"></div>
<div class="sep" style="left:642px;top:106px;height:22px"></div>
<svg class="a" style="left:649px;top:106px" width="17" height="20"><use href="#shade"/></svg><div class="ch" style="left:671px;top:114px"></div>
<svg class="a" style="left:688px;top:108px" width="15" height="17"><use href="#bord"/></svg><div class="ch" style="left:710px;top:114px"></div>
<i class="lb" style="left:590px">段落</i><svg class="a" style="left:747px;top:144px" width="9" height="9"><use href="#launch"/></svg>
<div class="sep" style="left:758px"></div>

<!-- gallery right -->
<div class="w" style="left:768px;top:69px;width:892px;height:60px;background:#fff;border:1px solid #d2d2d2;box-sizing:border-box"></div>
<div class="w" style="left:1635px;top:69px;width:24px;height:60px;background:#f3f3f3;border:1px solid #a8a8a8;box-sizing:border-box"></div>
<div class="ch" style="left:1644px;top:95px"></div>
<div class="w" style="left:1274px;top:70px;width:71px;height:57px;background:#fff;border:2px solid #ababab;box-sizing:border-box;outline:3px solid #d8d8d8;outline-offset:-5px"></div>
<i style="left:776px;top:84px;font:13.500px/14px 'Liberation Serif';color:#222">AaBbCcDdI</i><i style="left:789px;top:107px">↲</i><i style="left:795px;top:107px">正文</i>
<i style="left:848px;top:84px;font:13.500px/14px 'Liberation Serif';color:#222">AaBbCcDdI</i><i style="left:849px;top:107px">正文文本...</i>
<i style="left:921px;top:84px;font-size:13.500px;color:#2b4a7a;overflow:hidden;width:59px">AaBbCcDdI</i><i style="left:920px;top:107px">中文正文.</i>
<i style="left:992px;top:84px;font:13.500px/14px 'Liberation Serif';color:#222">AaBbCcDdI</i><i style="left:996px;top:107px">↲</i><i style="left:1002px;top:107px">无间隔</i>
<i style="left:1066px;top:80px;font:21px/22px 'Liberation Serif';color:#222">1</i><i style="left:1097px;top:80px;font:21px/22px 'Liberation Serif';color:#222;overflow:hidden;width:28px">Aal</i><i style="left:1076px;top:107px">标题 1</i>
<i style="left:1138px;top:80px;font:20px/22px 'Liberation Serif';color:#222">1.1</i><i style="left:1187px;top:80px;font:20px/22px 'Liberation Serif';color:#222">A</i><i style="left:1148px;top:107px">标题 2</i>
<i style="left:1209px;top:80px;font:20px/22px 'Liberation Serif';color:#222;letter-spacing:2px">1.1.1</i><i style="left:1220px;top:107px">标题 3</i>
<i style="left:1281px;top:82px;font:17px/20px 'Liberation Serif';color:#222;letter-spacing:1px">1.1.1.1</i><i style="left:1292px;top:107px">标题 4</i>
<i style="left:1352px;top:83px;font:15px/18px 'Liberation Serif';color:#222;letter-spacing:1px">1.1.1.1.:</i><i style="left:1363px;top:107px">标题 5</i>
<i style="left:1423px;top:83px;font:15px/18px 'Liberation Serif';color:#222;letter-spacing:1px">1.1.1.1.:</i><i style="left:1435px;top:107px">标题 6</i>
<i style="left:1495px;top:83px;font:15px/18px 'Liberation Serif';color:#222;letter-spacing:1px">1.1.1.1.</i><i style="left:1508px;top:107px">标题 7</i>
<i style="left:1570px;top:79px;font-size:32px;color:#222;line-height:22px">AaB</i><i style="left:1586px;top:107px">标题</i>
<i class="lb" style="left:1205px">样式</i><svg class="a" style="left:1658px;top:144px" width="9" height="9"><use href="#launch"/></svg>

<div class="sep" style="left:1669px"></div>
<svg class="a" style="left:1681px;top:71px" width="13" height="15"><use href="#find"/></svg><i style="left:1699px;top:70px">查找</i><div class="ch" style="left:1739px;top:75px"></div>
<i style="left:1680px;top:90px;font-size:10px;line-height:10px;color:#7b4fa8">ab</i><i style="left:1682px;top:99px;font-size:10px;line-height:10px;color:#2b579a">ac</i><i style="left:1699px;top:93px">替换</i>
<svg class="a" style="left:1684px;top:115px" width="11" height="16"><use href="#curs"/></svg><i style="left:1699px;top:116px">选择</i><div class="ch" style="left:1730px;top:121px"></div>
<i class="lb" style="left:1703px">编辑</i>
<div class="sep" style="left:1763px"></div>
<div class="w" style="left:1786px;top:78px;width:10px;height:12px;border-radius:5px;background:#f7931e"></div>
<i style="left:1784px;top:103px">加</i><i style="left:1778px;top:118px">载项</i>
<i class="lb" style="left:1772px">加载项</i>
<div class="sep" style="left:1821px"></div>
<svg class="a" style="left:1841px;top:73px" width="28" height="23"><use href="#bd"/></svg>
<i style="left:1837px;top:103px">保存到</i><i style="left:1831px;top:118px">百度网盘</i>
<i class="lb" style="left:1843px">保存</i>
<div class="sep" style="left:1890px"></div>
<div class="w" style="left:1903px;top:149px;width:6px;height:6px;border-left:1px solid #555;border-top:1px solid #555;transform:rotate(45deg)"></div>

<div class="w" style="left:1680px;top:6px;width:46px;height:19px;background:#7f9cc6"></div><i style="left:1691px;top:8px;color:#eef2f8">登录</i>
<svg class="a" style="left:1751px;top:8px" width="15" height="15"><use href="#rest"/></svg>
<div class="w" style="left:1800px;top:14px;width:11px;height:1px;background:#dfe7f3"></div>
<div class="w" style="left:1846px;top:9px;width:9px;height:17px;border:1px solid #dfe7f3;box-sizing:border-box"></div>
<svg class="a" style="left:1892px;top:9px;color:#dfe7f3" width="11" height="18"><use href="#x"/></svg>
<div class="w" style="left:1845px;top:36px;width:64px;height:24px;border:1px solid #fff;box-sizing:border-box"></div>
<svg class="a" style="left:1850px;top:41px" width="11" height="16"><use href="#share"/></svg><i style="left:1865px;top:40px;color:#fff;font-size:14px;font-weight:bold">共享</i><div class="ch" style="left:1900px;top:45px;border-color:#fff"></div>

<svg class="a" style="left:9px;top:162px" width="21" height="22"><ellipse cx="10.500" cy="11" rx="10" ry="11" fill="#2f6fb0"/><rect x="9" y="9" width="3" height="9" fill="#fff"/><rect x="9" y="4" width="3" height="3" fill="#fff"/></svg>
<i style="left:39px;top:166px;font-weight:bold;font-size:12px">获取正版 OFFICE</i>
<i style="left:144px;top:166px;font-size:12px;letter-spacing:-.1px">你的许可证并非正版，你可能是盗版软件的受害者。立即通过正版 Office 避免中断并使文件保持安全。</i>
<div class="box" style="left:701px;top:161px;width:120px;height:23px;background:#fffdf0"></div><i style="left:717px;top:166px">获取正版 Office</i>
<div class="box" style="left:830px;top:161px;width:106px;height:23px;background:#fffdf0"></div><i style="left:847px;top:166px">了解详细信息</i>
<svg class="a" style="left:1899px;top:168px;color:#555" width="10" height="10"><use href="#x"/></svg>

<div class="w" style="left:264px;top:188px;width:1px;height:829px;background:#c8c8c8"></div>
<i style="left:14px;top:204px;font-size:21px;line-height:22px">导航</i>
<div class="w" style="left:195px;top:204px;width:9px;height:9px;border-right:1px solid #555;border-bottom:1px solid #555;transform:rotate(45deg) scale(.9)"></div>
<svg class="a" style="left:236px;top:206px;color:#555" width="10" height="10"><use href="#x"/></svg>
<div class="box" style="left:14px;top:244px;width:232px;height:26px"></div><i style="left:21px;top:249px;color:#666">在文档中搜索</i>
<svg class="a" style="left:218px;top:249px" width="13" height="15"><use href="#find"/></svg><div class="ch" style="left:238px;top:254px"></div>
<i style="left:14px;top:289px;color:#2b579a">标题</i><i style="left:63px;top:289px">页面</i><i style="left:112px;top:289px">结果</i>
<div class="w" style="left:14px;top:310px;width:26px;height:3px;background:#2b579a"></div>
<div class="w" style="left:78px;top:648px;width:155px;height:20px;background:#c1d5f1"></div>
<div class="nav" style="left:0;top:311.500px;width:260px">
<div style="padding-left:67px">7.3.2 发票</div>
<div style="padding-left:51px">7.4 正在供货和新承接的项目情...</div>
<div style="padding-left:51px">7.5 近年未发生的诉讼及仲裁情况</div>
<div style="padding-left:51px">7.6 制造商授权书</div>
<div style="padding-left:51px">7.7 机密信息接受承诺函</div>
<div style="padding-left:51px">7.8 产品迟交货及质量诉讼风险...</div>
<div style="padding-left:51px"><span class="tri" style="left:35px"></span>7.9 资格要求证明资料</div>
<div style="padding-left:67px">7.9.1 营业执照（非联合体投...</div>
<div style="padding-left:67px">7.9.2 授权书（光伏）</div>
<div style="padding-left:67px">7.9.3 授权书（蓄电池）</div>
<div style="padding-left:67px">7.9.4 审计报告</div>
<div style="padding-left:67px"><span class="tri" style="left:51px"></span>7.9.5 业绩要求</div>
<div style="padding-left:83px">7.9.5.1 合同LHSY-WZGS...</div>
<div style="padding-left:83px">7.9.5.2 发票</div>
<div style="padding-left:67px"><span class="tri" style="left:51px"></span>7.9.6 信誉要求</div>
<div style="padding-left:83px">7.9.6.1 未被列入经营异常...</div>
<div style="padding-left:83px">7.9.6.2 最近五年内未发生...</div>
<div style="padding-left:67px"><span class="tri" style="left:51px"></span>7.9.7 其他要求</div>
<div style="padding-left:83px">7.9.7.1 能源一号网入网供...</div>
<div style="padding-left:83px">7.9.7.2 无法律纠纷情况</div>
<div style="padding-left:83px">7.9.7.3 未被中国石油天然...</div>
<div style="padding-left:67px">7.9.8 承诺函</div>
<div style="padding-left:35px">8 招标代理服务费（中标服务费）...</div>
<div style="padding-left:35px">9 投标人情况承诺函</div>
<div style="padding-left:35px">10 联合体协议书</div>
<div style="padding-left:35px"><span class="tri" style="left:21px"></span>11 商务评分证明资料</div>
<div style="padding-left:52px">11.1 交货期</div>
<div style="padding-left:52px">11.2 业绩</div>
<div style="padding-left:52px">11.3 项目实施计划</div>
<div style="padding-left:52px">11.4 售后服务</div>
<div style="padding-left:52px">11.5 质保期内外的服务承诺</div>
<div style="padding-left:52px">11.6 无失信扣分</div>
<div style="padding-left:35px"><span class="tri" style="left:21px"></span>12 其它资料</div>
</div>

<div class="w" style="left:265px;top:190px;width:26px;height:25px;background:#d2d2d2"></div><div class="w" style="left:268px;top:193px;width:20px;height:19px;background:#fff"></div><i style="left:274px;top:196px;font-weight:bold;font-size:10px">L</i>
<div class="w" style="left:537px;top:193px;width:1122px;height:16px;background:#fff"></div>
<div class="w" style="left:537px;top:193px;width:91px;height:16px;background:#c6c6c6"></div>
<div class="w" style="left:1565px;top:193px;width:94px;height:16px;background:#c6c6c6"></div>
<div class="rul" style="left:533px;top:193px"><span>6</span><span>4</span><span>2</span></div>
<div class="rul" style="left:645px;top:193px"><span>2</span><span>4</span><span>6</span><span>8</span><span>10</span><span>12</span><span>14</span><span>16</span><span>18</span><span>20</span><span>22</span><span>24</span><span>26</span><span>28</span><span>30</span><span>32</span><span>34</span><span>36</span><span>38</span><span>40</span><span>42</span><span>44</span><span>46</span><span>48</span><span>50</span><span>52</span><span>54</span><span>56</span><span>58</span><span>60</span><span>62</span><span>64</span><span>66</span><span>68</span><span>70</span><span>72</span></div>
<svg class="a" style="left:630px;top:190px" width="12" height="28"><path d="M1 1h10v3l-5 7-5-7z" fill="#fff" stroke="#777"/><path d="M6 11l5 5v11H1V16z" fill="#fff" stroke="#777"/><path d="M1 21h10" stroke="#777"/></svg>
<svg class="a" style="left:1560px;top:204px" width="12" height="10"><path d="M5 1l5 5v4H0V6z" fill="#fff" stroke="#777"/></svg>

<!-- vertical ruler -->
<div class="w" style="left:270px;top:350px;width:17px;height:667px;background:#fff"></div>
<div class="w" style="left:270px;top:350px;width:17px;height:94px;background:#c6c6c6"></div>
<div class="w" style="left:276px;top:361px;width:6px;height:656px;background:repeating-linear-gradient(transparent 0 10px,#444 10px 11px,transparent 11px 30.500px,#444 30.500px 31.500px,transparent 31.500px 41.500px)"></div>
<div class="vr" style="left:270px;top:339.300px;height:678px;overflow:hidden"><span style="height:41.500px"><b>4</b></span><span style="height:41.500px"><b>2</b></span><span style="height:41.500px"><b></b></span><span style="height:41.500px"><b>2</b></span><span style="height:41.500px"><b>4</b></span><span style="height:41.500px"><b>6</b></span><span style="height:41.500px"><b>8</b></span><span style="height:41.500px"><b>10</b></span><span style="height:41.500px"><b>12</b></span><span style="height:41.500px"><b>14</b></span><span style="height:41.500px"><b>16</b></span><span style="height:41.500px"><b>18</b></span><span style="height:41.500px"><b>20</b></span><span style="height:41.500px"><b>22</b></span><span style="height:41.500px"><b>24</b></span><span style="height:41.500px"><b>26</b></span></div>

<!-- page 1 -->
<div class="w" style="left:538px;top:218px;width:1122px;height:117px;background:#fff;border-bottom:1px solid #c6c6c6;box-sizing:border-box"></div>
<div class="w" style="left:797px;top:225px;width:605px;height:8px;background:#a6c9ec"></div>
<i style="left:1402px;top:219px;color:#777;font-size:9px">.</i>
<div class="w" style="left:632px;top:241px;width:1px;height:24px;background:#aaa"></div><div class="w" style="left:609px;top:241px;width:24px;height:1px;background:#aaa"></div>
<div class="w" style="left:1566px;top:241px;width:1px;height:24px;background:#aaa"></div><div class="w" style="left:1566px;top:241px;width:24px;height:1px;background:#aaa"></div>
<i style="left:805px;top:251px;color:#b5b5b5;font-size:12.500px;font-family:'Liberation Serif','Noto Serif CJK SC',serif">濮阳市中鹏工业电器有限责任公司-投标文件</i><i class="pm" style="left:1045px;top:249px">↵</i>
<i style="left:1107px;top:251px;color:#b5b5b5">87</i><i class="pm" style="left:1120px;top:249px">↵</i>
<i class="pm" style="left:1407px;top:228px;color:#888">↵</i><i class="pm" style="left:635px;top:269px;color:#888">↵</i>
</div>

<!-- page 2 and below (absolute coords) -->
<div class="w" style="left:2463px;top:337px;width:1122px;height:667px;background:#fff;border-top:1px solid #c6c6c6;box-sizing:border-box;overflow:hidden">
<svg class="a" style="left:0;top:0" width="1122" height="120"><path d="M0 0h15l12 77H0z" fill="#cfe2f5"/><path d="M17-1h28l34 62H47z" fill="#a6c9ec"/><path d="M1074 0h48v39h-62z" fill="#edf4fb"/></svg>
</div>
<div class="w" style="left:2557px;top:406px;width:1px;height:24px;background:#aaa"></div><div class="w" style="left:2534px;top:429px;width:24px;height:1px;background:#aaa"></div>
<div class="w" style="left:3491px;top:406px;width:1px;height:24px;background:#aaa"></div><div class="w" style="left:3491px;top:429px;width:24px;height:1px;background:#aaa"></div>
<i class="pm" style="left:3025px;top:400px;color:#888">↵</i>
<div class="w" style="left:2550px;top:444px;width:3px;height:4px;background:#222"></div>
<i style="left:2558px;top:437px;font:14px/18px 'Liberation Serif',serif;letter-spacing:2px;color:#222">7.9.6.2</i>
<i style="left:2641px;top:437px;font:16px/18px 'Liberation Serif','Noto Serif CJK SC',serif;color:#111">最近五年内未发生重大产品质量问题<span class="pm" style="margin:0">↵</span></i>
<!-- screenshot -->
<div class="w" style="left:2558px;top:485px;width:933px;height:454px;background:#f5f5f5;overflow:hidden">
 <svg class="a" style="left:43px;top:0" width="839" height="104">
  <defs><linearGradient id="bn" x1="0" x2="1"><stop offset="0" stop-color="#f6dbc0"/><stop offset=".35" stop-color="#fde9d2"/><stop offset=".7" stop-color="#fdebd6"/><stop offset="1" stop-color="#f7dcc2"/></linearGradient></defs>
  <rect width="839" height="104" fill="url(#bn)"/><rect width="839" height="18" fill="#fff" opacity=".35"/>
  <path d="M36 53c-3-4-3-14-2-18 1 8 1 12 3 16h24c2-4 3-10 3-16 1 4 1 14-2 18l6 4c2 16 0 28-4 36l-2 10h-4l-3-8H46l-2 8h-4l-2-10c-4-8-6-20-4-36z" fill="#e8ae85"/>
  <path d="M42 62c8-3 17-3 24 0M40 72h28M42 82h24" stroke="#d4895e" fill="none"/>
  <path d="M640 104c10-30 30-40 45-44 4-6 6-18 7-32 3-8 28-10 32-2l2 18c10 8 18 18 24 26v34z" fill="#e9bc99"/>
  <path d="M720 104c-3-24-12-48-24-64 16 4 26 12 40 22s10 30 10 42z" fill="#f1d0b4"/><path d="M740 60c20 2 50 10 60 44h-50z" fill="#ecc4a3"/><path d="M780 40c20 0 40 30 52 64h-40z" fill="#efcaac" opacity=".8"/>
  <path d="M28 104c24-4 44-8 64-20 24-12 86-22 124 2 14 8 24 12 32 18z" fill="#d81e2d"/>
  <path d="M60 104c50-28 130-32 182 0z" fill="#bf1a2b" opacity=".6"/>
  <g transform="translate(161,37)"><ellipse cx="17" cy="20" rx="15" ry="20" fill="#f2c230"/><ellipse cx="17" cy="18" rx="11" ry="13" fill="#d71f26"/><path d="M17 8l2 5h5l-4 3 2 5-5-3-5 3 2-5-4-3h5z" fill="#f7d341"/><path d="M5 33h24v5H5z" fill="#d71f26"/></g>
 </svg>
 <i class="tiny" style="left:199px;top:4px;font-size:8px;color:#6d5a4a">欢迎来到信用中国</i>
 <i class="tiny" style="left:662px;top:4px;font-size:8px;color:#6d5a4a">通知公告</i><i class="tiny" style="left:700px;top:4px;font-size:8px;color:#6d5a4a">|&nbsp;&nbsp;网站声明</i>
 <i class="tiny" style="left:249px;top:39px;font-size:25px;font-weight:bold;color:#bf1a2d;line-height:28px">信用中国</i>
 <i class="tiny" style="left:250px;top:67px;font-size:7.500px;color:#5a4a40;line-height:10px">WWW.CREDITCHINA.GOV.CN</i>
 <div class="w" style="left:472px;top:45px;width:254px;height:23px;background:#fff;border-radius:2px"></div>
 <i class="tiny" style="left:481px;top:52px;font-size:8px;color:#444">信用信息 ▾</i><i class="tiny" style="left:526px;top:52px;font-size:8px;color:#aaa">请输入主体名称或者统一社会信用代码</i>
 <div class="w" style="left:679px;top:47px;width:43px;height:19px;background:#bf1a2d"></div><i class="tiny" style="left:691px;top:52px;font-size:8px;color:#fff">搜索</i>
 <div class="w" style="left:0;top:104px;width:925px;height:35px;background:#bd1a2d;border-bottom:1px solid #d96a75;box-sizing:border-box"></div>
 <i class="tiny" style="left:199px;top:115px;font-size:10px;color:#f5d5d8">信息公示</i><i class="tiny" style="left:281px;top:115px;font-size:10px;color:#f5d5d8">信用动态</i><i class="tiny" style="left:362px;top:115px;font-size:10px;color:#f5d5d8">信用立法</i><i class="tiny" style="left:443px;top:115px;font-size:10px;color:#f5d5d8">政策法规</i><i class="tiny" style="left:525px;top:115px;font-size:10px;color:#f5d5d8">信用承诺</i><i class="tiny" style="left:606px;top:115px;font-size:10px;color:#f5d5d8">城市信用</i><i class="tiny" style="left:686px;top:115px;font-size:10px;color:#f5d5d8">走进信用</i>
 <i class="tiny" style="left:199px;top:150px;font-size:8px;color:#888">首页 &gt; 信用公示 &gt; <span style="color:#333">严重失信主体名单查询</span></i>
 <div class="w" style="left:200px;top:170px;width:526px;height:89px;background:#fff"></div>
 <i class="tiny" style="left:409px;top:194px;font-size:11px;font-weight:bold;color:#bf1a2d">严重失信主体名单查询</i>
 <div class="w" style="left:332px;top:221px;width:262px;height:16px;background:#fff;border:1px solid #ddd;box-sizing:border-box"></div>
 <i class="tiny" style="left:340px;top:225px;font-size:7.500px;color:#333">濮阳市中鹏工业电器有限责任公司</i>
 <div class="w" style="left:559px;top:221px;width:35px;height:16px;background:#bf1a2d"></div><i class="tiny" style="left:569px;top:225px;font-size:8px;color:#fff">查询</i>
 <div class="w" style="left:200px;top:268px;width:526px;height:165px;background:#fff"></div>
 <i class="tiny" style="left:209px;top:276px;font-size:8.500px;font-weight:bold;color:#333">查询结果</i>
 <div class="w" style="left:209px;top:291px;width:507px;height:2px;background:#eee"></div><div class="w" style="left:209px;top:291px;width:35px;height:2px;background:#d6707c"></div>
 <svg class="a" style="left:400px;top:300px" width="120" height="90">
  <path d="M37 19h61v73H37z" fill="#fbfbfb" stroke="#eee"/><path d="M45 24h45v3H45zM45 33h33v3H45zM45 43h43v3H45zM45 53h27v3H45zM45 62h30v3H45zM45 72h34v3H45zM45 81h30v3H45z" fill="#e5e5e5"/>
  <path d="M95 33c3 3 4 6 3 9-2 2-6 2-7 0-1-3 1-6 4-9zM19 75c3 3 8 5 8 11 0 3-3 4-8 4s-8-2-7-5c0-3 3-4 4-6z" fill="#fff" stroke="#ddd"/>
  <ellipse cx="79" cy="63" rx="13" ry="16" fill="#d5e3f0" stroke="#0d62ae" stroke-width="2.500"/><path d="M84 77l9 17" stroke="#0d62ae" stroke-width="3"/>
 </svg>
 <i class="tiny" style="left:415px;top:412px;font-size:7.500px;color:#666">很抱歉，没有找到您搜索的数据</i>
 <div class="w" style="left:925px;top:0;width:8px;height:435px;background:#2b2b2b"></div>
 <div class="w" style="left:926px;top:10px;width:6px;height:130px;background:#8a8a8a"></div>
 <div class="w" style="left:0;top:434px;width:933px;height:1px;background:#c8c8c8"></div>
 <div class="w" style="left:0;top:435px;width:933px;height:19px;background:linear-gradient(90deg,#4a4a3c,#4c4638 20%,#4a352a 45%,#574a3c 55%,#4b4a3a 80%,#3e3d30)"></div>
 <div class="w" style="left:8px;top:439px;width:8px;height:8px;background:#eee"></div>
 <div class="w" style="left:32px;top:439px;width:8px;height:10px;border:1px solid #eee;border-radius:5px;box-sizing:border-box"></div>
 <div class="w" style="left:56px;top:439px;width:7px;height:9px;border:1px solid #ccc;box-sizing:border-box"></div>
 <svg class="a" style="left:76px;top:437px" width="14" height="14"><circle cx="7" cy="7" r="6.500" fill="#e8c22c"/><path d="M7 7L1.500 3.500A6.500 6.500 0 0 1 13 4z" fill="#d8382c"/><path d="M7 7l-5.500-3.500A6.500 6.500 0 0 0 6 13.500z" fill="#3aa757"/><circle cx="7" cy="7" r="2.800" fill="#3b7de3" stroke="#fff"/></svg>
 <i class="tiny" style="left:90px;top:440px;font-size:7.500px;color:#e8e8e8">严重失信主体名单...</i>
 <div class="w" style="left:73px;top:453px;width:74px;height:1px;background:#bbb"></div>
 <i class="tiny" style="left:908px;top:437px;font-size:7px;color:#eee">14:02</i>
 <i class="tiny" style="left:898px;top:447px;font-size:7px;color:#eee">2025-07-24</i>
</div>
<i class="pm" style="left:3489px;top:927px;color:#888">↵</i>
<!-- line 2, red rect -->
<i style="left:2878px;top:464px;font:14px/18px 'Liberation Serif','Noto Serif CJK SC',serif;color:#111">我公司承诺最近五年内未发生重大产品质量问题<span class="pm" style="margin:0">↵</span></i>
<div class="w" style="left:2870px;top:455px;width:362px;height:49px;border:4px solid #c9141f;box-sizing:border-box"></div>
<!-- stamp -->
<svg class="a" style="left:3040px;top:600px" width="190" height="190" viewBox="0 0 190 190">
 <ellipse cx="94" cy="94" rx="84" ry="87" fill="none" stroke="#f00" stroke-width="2.500"/>
 <defs><path id="arc" d="M38 160A72 76 0 1 1 150 160"/></defs>
 <text font-size="19" fill="#f00" font-family="Liberation Serif,Noto Serif CJK SC,serif" font-weight="300" letter-spacing="8"><textPath href="#arc">濮阳市中鹏工业电器有限责任公司</textPath></text>
 <path d="M94 72l6 20h21l-17 12 7 20-17-12-17 12 7-20-17-12h21z" fill="none" stroke="#f00" stroke-width="1" stroke-dasharray="2 1.500"/>
</svg>

<!-- right status bar -->
<div class="w" style="left:1925px;top:1004px;width:1912px;height:22px;background:#f3f3f3;border-top:1px solid #c6c6c6;box-sizing:border-box"></div>
<i style="left:1937px;top:1008px">第 88 页，共 128 页</i><i style="left:2067px;top:1008px">17/18477 个字</i>
<svg class="a" style="left:2168px;top:1008px" width="16" height="12"><use href="#book"/></svg>
<i style="left:2200px;top:1008px">简体中文(中国大陆)</i><i style="left:2322px;top:1008px">修订: 关闭</i>
<svg class="a" style="left:2396px;top:1008px" width="16" height="12"><use href="#acc"/></svg><i style="left:2415px;top:1008px">辅助功能: 调查</i>
<svg class="a" style="left:3554px;top:1007px" width="11" height="15"><use href="#vw1"/></svg>
<div class="w" style="left:3580px;top:1005px;width:40px;height:21px;background:#c6c6c6"></div>
<svg class="a" style="left:3593px;top:1007px" width="13" height="15"><use href="#vw2"/></svg>
<svg class="a" style="left:3633px;top:1007px" width="13" height="15"><use href="#vw3"/></svg>
<div class="w" style="left:3667px;top:1015px;width:6px;height:1px;background:#555"></div><div class="w" style="left:3680px;top:1015px;width:100px;height:1px;background:#555"></div><div class="w" style="left:3729px;top:1009px;width:3px;height:11px;background:#555"></div>
<i style="left:3785px;top:1008px">+</i><i style="left:3805px;top:1008px">100%</i>

<!-- taskbar -->
<div class="w" style="left:0;top:1026px;width:3837px;height:7px;background:linear-gradient(90deg,#1f2d36,#24353d 50%,#22333a 75%,#2a3a3f);overflow:hidden">
<div class="w" style="left:789px;top:0;width:47px;height:7px;background:#5a696d"></div>
<div class="w" style="left:2709px;top:0;width:48px;height:7px;background:#5a696d"></div>
<i style="left:1876px;top:2px;color:#fff;font-size:11px">14:02</i>
<i style="left:3743px;top:2px;color:#fff;font-size:11px">14:02</i>
</div>
</body></html>
